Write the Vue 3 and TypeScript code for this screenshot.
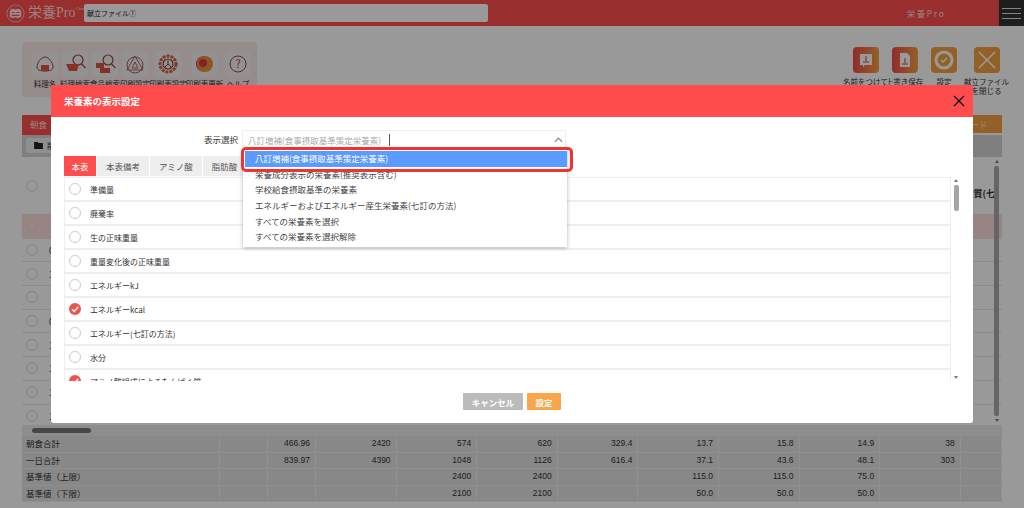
<script lang="ts" setup>
interface Nutrient {
  name: string;
  checked: boolean;
}

const leftTools = [
  { label: '料理名', kind: 'rice' },
  { label: '料理検索', kind: 'cart' },
  { label: '食品検索', kind: 'food' },
  { label: '印刷設定', kind: 'triangle' },
  { label: '印刷表設定', kind: 'gear' },
  { label: '印刷表更新', kind: 'ball' },
  { label: 'ヘルプ', kind: 'help' },
];

const rightTools = [
  { label: '名前をつけて', kind: 'saveas' },
  { label: '上書き保存', kind: 'save' },
  { label: '設定', kind: 'setting' },
  { label: '献立ファイルを閉じる', kind: 'close' },
];

const sheetRows = [
  { no: '', pink: true },
  { no: '0', pink: false },
  { no: '1', pink: false },
  { no: '', pink: false },
  { no: '0', pink: false },
  { no: '1', pink: false },
  { no: '1', pink: false },
  { no: '1', pink: false },
  { no: '1', pink: false },
];

const totals = [
  ['朝食合計', '', '466.96', '2420', '574', '620', '329.4', '13.7', '15.8', '14.9', '38', ''],
  ['一日合計', '', '839.97', '4390', '1048', '1126', '616.4', '37.1', '43.6', '48.1', '303', ''],
  ['基準値（上限）', '', '', '', '2400', '2400', '', '115.0', '115.0', '75.0', '', ''],
  ['基準値（下限）', '', '', '', '2100', '2100', '', '50.0', '50.0', '50.0', '', ''],
];

const tabs = ['本表', '本表備考', 'アミノ酸', '脂肪酸'];

const options = [
  '八訂増補(食事摂取基準策定栄養素)',
  '栄養成分表示の栄養素(推奨表示含む)',
  '学校給食摂取基準の栄養素',
  'エネルギーおよびエネルギー産生栄養素(七訂の方法)',
  'すべての栄養素を選択',
  'すべての栄養素を選択解除',
];

const nutrients: Nutrient[] = [
  { name: '準備量', checked: false },
  { name: '廃棄率', checked: false },
  { name: '生の正味重量', checked: false },
  { name: '重量変化後の正味重量', checked: false },
  { name: 'エネルギーkJ', checked: false },
  { name: 'エネルギーkcal', checked: true },
  { name: 'エネルギー(七訂の方法)', checked: false },
  { name: '水分', checked: false },
  { name: 'アミノ酸組成によるたんぱく質', checked: true },
];
</script>

<template>
  <div class="page">
    <header class="topbar">
      <svg class="logo" viewBox="0 0 20 20" aria-hidden="true">
        <circle cx="10" cy="10" r="9" fill="none" stroke="#ffd0d0" stroke-width="0.8" />
        <path d="M4 7c1-2 4-3 6-1 2-2 5-1 6 1v6c-1 2-4 2-6 1-2 1-5 1-6-1z" fill="#ffe4e4" />
        <path d="M6 9h3M11 9h3M6 12h8" stroke="#ff4d4d" stroke-width="1.2" />
      </svg>
      <span class="brand">栄養Pro<sup>Cloud</sup></span>
      <div class="file-name">献立ファイル①</div>
      <span class="app-name">栄養Pro</span>
      <div class="burger"><i></i><i></i><i></i></div>
    </header>

    <section class="toolbar">
      <div class="tool-panel">
        <div v-for="t in leftTools" :key="t.label" class="tool">
          <div class="tile">
            <svg viewBox="0 0 26 26" aria-hidden="true">
              <template v-if="t.kind === 'rice'">
                <path d="M13 6c-4 0-8 6-8 10 0 3 3 4 8 4s8-1 8-4c0-4-4-10-8-10z" fill="none" stroke="#a04040" />
                <rect x="9" y="14" width="8" height="6" fill="#e0553f" />
              </template>
              <template v-else-if="t.kind === 'cart'">
                <circle cx="16" cy="9" r="5" fill="none" stroke="#a04040" stroke-width="1.2" />
                <path d="M19.5 13l4 4" stroke="#a04040" stroke-width="1.2" />
                <path d="M4 13h13l-2 7H7z" fill="#e0553f" />
              </template>
              <template v-else-if="t.kind === 'food'">
                <circle cx="16" cy="9" r="5" fill="none" stroke="#a04040" stroke-width="1.2" />
                <path d="M19.5 13l4 4" stroke="#a04040" stroke-width="1.2" />
                <rect x="4" y="12" width="8" height="5" fill="#e0553f" />
                <rect x="8" y="17" width="10" height="5" fill="#d9503a" />
              </template>
              <template v-else-if="t.kind === 'triangle'">
                <circle cx="13" cy="14" r="8" fill="none" stroke="#b06060" />
                <path d="M13 5l8 14H5zM13 11l3 6h-6z" fill="none" stroke="#b06060" />
              </template>
              <template v-else-if="t.kind === 'gear'">
                <circle cx="13" cy="13" r="8" fill="none" stroke="#d9603a" stroke-width="3" stroke-dasharray="3 1" />
                <circle cx="13" cy="13" r="5" fill="none" stroke="#8a3a3a" stroke-width="1.2" />
                <path d="M13 13V9M13 13l-3 3M13 13l3 3" stroke="#8a3a3a" />
              </template>
              <template v-else-if="t.kind === 'ball'">
                <circle cx="13" cy="13" r="8" fill="#e8903a" />
                <path d="M13 5a8 8 0 0 0 0 16 8 8 0 0 1-2-16z" fill="#d93a3a" />
                <circle cx="11" cy="12" r="4" fill="#d93a3a" />
              </template>
              <template v-else>
                <circle cx="13" cy="13" r="8" fill="none" stroke="#a04040" />
                <text x="13" y="17" text-anchor="middle" font-size="11" fill="#a04040">?</text>
              </template>
            </svg>
          </div>
          <span class="tool-label">{{ t.label }}</span>
        </div>
      </div>

      <div class="file-tools">
        <div v-for="t in rightTools" :key="t.label" class="file-tool" :class="t.kind">
          <div class="tile-grad">
            <svg viewBox="0 0 26 26" aria-hidden="true">
              <template v-if="t.kind === 'saveas'">
                <path d="M7 7h12v11H12l-2 2v-2H7z" fill="#fff" />
                <path d="M13 9v5M10 15h6" stroke="#c04040" />
              </template>
              <template v-else-if="t.kind === 'save'">
                <path d="M8 6h7l3 3v11H8z" fill="#fff" />
                <path d="M13 11v5M10 17h6" stroke="#c04040" />
              </template>
              <template v-else-if="t.kind === 'setting'">
                <circle cx="13" cy="13" r="8" fill="none" stroke="#fff" stroke-width="3" />
                <path d="M10 13l2 2 4-4" fill="none" stroke="#fff" stroke-width="1.4" />
              </template>
              <template v-else>
                <path d="M5 5l16 16M21 5L5 21" stroke="#fff" stroke-width="1.6" />
              </template>
            </svg>
          </div>
          <span class="tool-label">{{ t.label }}</span>
        </div>
      </div>
    </section>

    <section class="sheet">
      <div class="sheet-tabs">
        <span class="meal-tab">朝食</span>
        <span class="card-tab">カード</span>
      </div>
      <div class="action-bar">
        <span class="folder-btn">
          <svg viewBox="0 0 10 8" aria-hidden="true"><path d="M0 0h4l1 1h5v7H0z" fill="#222" /></svg>
          削除
        </span>
      </div>
      <div class="sheet-body">
        <div class="sheet-head">
          <span class="radio-bg"></span>
          <span class="head-end">脂質(七</span>
        </div>
        <div v-for="(r, i) in sheetRows" :key="i" class="sheet-row" :class="{ pink: r.pink }">
          <span class="radio-cell"><span class="radio-bg"></span></span>
          <span class="row-no">{{ r.no }}</span>
        </div>
        <div class="v-scroll">
          <span class="arrow up"></span>
          <span class="v-thumb"></span>
          <span class="arrow down"></span>
        </div>
      </div>
      <div class="h-scroll"><span class="h-thumb"></span></div>
      <div class="totals">
        <div v-for="row in totals" :key="row[0]" class="total-row">
          <span v-for="(c, i) in row" :key="i" class="total-cell" :class="{ label: i === 0 }">{{ c }}</span>
        </div>
      </div>
    </section>

    <div class="backdrop"></div>

    <div class="dialog">
      <div class="dialog-head">
        <span>栄養素の表示設定</span>
        <svg class="dialog-close" viewBox="0 0 12 12" aria-hidden="true">
          <path d="M1 1l10 10M11 1L1 11" stroke="#111" stroke-width="1.4" />
        </svg>
      </div>
      <div class="dialog-body">
        <div class="select-row">
          <label class="select-label">表示選択</label>
          <div class="select-box">
            <span class="select-value">八訂増補(食事摂取基準策定栄養素)</span>
            <span class="caret"></span>
            <svg class="chevron" viewBox="0 0 10 6" aria-hidden="true">
              <path d="M1 5l4-4 4 4" fill="none" stroke="#999" stroke-width="1.6" />
            </svg>
            <ul class="options">
              <li v-for="(o, i) in options" :key="o" :class="{ active: i === 0 }">{{ o }}</li>
            </ul>
            <span class="callout"></span>
          </div>
        </div>

        <div class="tabs">
          <span v-for="(t, i) in tabs" :key="t" class="tab" :class="{ active: i === 0 }">{{ t }}</span>
        </div>

        <div class="list-wrap">
          <div class="list">
            <div v-for="n in nutrients" :key="n.name" class="list-row">
              <span class="radio" :class="{ on: n.checked }">
                <svg v-if="n.checked" viewBox="0 0 12 12" aria-hidden="true">
                  <path d="M3 6.2l2.2 2.2L9.2 4" fill="none" stroke="#fff" stroke-width="1.4" />
                </svg>
              </span>
              <span class="list-name">{{ n.name }}</span>
            </div>
          </div>
          <div class="list-scroll">
            <span class="arrow up small"></span>
            <span class="list-thumb"></span>
            <span class="arrow down small"></span>
          </div>
        </div>

        <div class="dialog-foot">
          <button class="btn cancel">キャンセル</button>
          <button class="btn ok">設定</button>
        </div>
      </div>
    </div>
  </div>
</template>

<style scoped>
.page {
  position: relative;
  width: 1024px;
  height: 508px;
  overflow: hidden;
  background: #fff;
  font-family: "Noto Sans CJK JP", "Noto Sans", sans-serif;
  font-size: 8.5px;
  color: #333;
}

.topbar {
  display: flex;
  align-items: center;
  height: 26px;
  background: #ff4d4d;
  padding-left: 6px;
}
.logo {
  width: 19px;
  height: 19px;
  flex: none;
}
.brand {
  width: 56px;
  margin-left: 3px;
  font-family: "Liberation Serif", "Noto Sans CJK JP", serif;
  font-size: 14px;
  color: #ffd9d9;
  white-space: nowrap;
  line-height: 1;
}
.brand sup {
  font-size: 4px;
  vertical-align: 7px;
}
.file-name {
  width: 406px;
  height: 18px;
  line-height: 18px;
  background: #fff;
  border-radius: 2px;
  padding-left: 3px;
  box-sizing: border-box;
  font-size: 7px;
  color: #222;
}
.app-name {
  margin-left: 419px;
  width: 93px;
  font-size: 8.5px;
  letter-spacing: 1.6px;
  color: #ffd9d9;
}
.burger {
  display: flex;
  flex-direction: column;
  justify-content: center;
  gap: 4px;
  width: 25px;
  height: 26px;
  padding: 0 3px;
  box-sizing: border-box;
  background: #333;
}
.burger i {
  display: block;
  height: 1px;
  background: #ddd;
}

.toolbar {
  display: flex;
  justify-content: space-between;
  height: 89px;
  padding: 16px 0 0 22px;
  box-sizing: border-box;
}
.tool-panel {
  display: flex;
  width: 235px;
  height: 55px;
  padding: 9px 0 0 8px;
  box-sizing: border-box;
  background: #fbe9e9;
  border-radius: 3px;
}
.tool {
  display: flex;
  flex-direction: column;
  align-items: center;
  width: 30px;
  white-space: nowrap;
}
.tool:nth-child(5) {
  width: 36px;
}
.tool:nth-child(6) {
  width: 37px;
}
.tile {
  width: 26px;
  height: 26px;
  background: #f3f3f3;
  border-radius: 4px;
}
.tile svg,
.tile-grad svg {
  display: block;
  width: 26px;
  height: 26px;
}
.tool-label {
  margin-top: 2px;
  font-size: 7.5px;
  line-height: 9px;
}
.file-tools {
  display: flex;
  margin-top: 5px;
  width: 178px;
  height: 40px;
}
.file-tool {
  display: flex;
  flex-direction: column;
  align-items: center;
  width: 39px;
  text-align: center;
  white-space: nowrap;
}
.file-tool.setting {
  width: 40px;
}
.file-tool.close {
  width: 45px;
  white-space: normal;
}
.file-tool .tool-label {
  margin-top: 4px;
}
.tile-grad {
  width: 26px;
  height: 26px;
  border-radius: 4px;
  background: linear-gradient(90deg, #f04a4a, #f7a043);
}
.file-tool.setting .tile-grad,
.file-tool.close .tile-grad {
  background: #f5a043;
}

.sheet {
  width: 980px;
  margin-left: 22px;
}
.sheet-tabs {
  display: flex;
  justify-content: space-between;
  height: 20px;
  font-size: 8.5px;
}
.meal-tab {
  width: 50px;
  height: 20px;
  line-height: 18px;
  padding-left: 8px;
  box-sizing: border-box;
  background: #ff4d4d;
  color: #ffdede;
}
.card-tab {
  width: 70px;
  height: 18px;
  line-height: 18px;
  padding-left: 30px;
  box-sizing: border-box;
  background: #f5a043;
  color: #ffe3c4;
}
.action-bar {
  height: 22px;
  padding: 3px 0 0 4px;
  box-sizing: border-box;
  background: #d4d4d4;
}
.folder-btn {
  display: inline-flex;
  align-items: center;
  gap: 4px;
  height: 15px;
  padding: 0 8px;
  background: #eee;
  border-radius: 2px;
  font-size: 8px;
}
.folder-btn svg {
  width: 9px;
  height: 7px;
}
.sheet-body {
  position: relative;
  height: 268px;
  overflow: hidden;
}
.sheet-head {
  display: flex;
  align-items: center;
  justify-content: space-between;
  height: 57px;
  padding: 0 6px 0 4px;
  box-sizing: border-box;
  font-weight: 700;
  font-size: 9px;
}
.head-end {
  margin-right: 0;
  padding-right: 1px;
  margin-top: 16px;
}
.sheet-row {
  display: flex;
  align-items: center;
  height: 23.7px;
  border-top: 1px solid #e6e6e6;
  box-sizing: border-box;
}
.sheet-row.pink {
  background: #ffdcdc;
}
.radio-cell {
  width: 22px;
  padding-left: 4px;
  box-sizing: border-box;
}
.radio-bg {
  display: block;
  width: 12px;
  height: 12px;
  border: 1px solid #ddd;
  border-radius: 50%;
  box-sizing: border-box;
}
.row-no {
  margin-left: 5px;
}
.v-scroll {
  position: absolute;
  top: 3px;
  right: 0;
  bottom: 3px;
  width: 11px;
  display: flex;
  flex-direction: column;
  align-items: center;
  gap: 3px;
}
.v-thumb {
  flex: 1;
  width: 5px;
  background: #a8a8a8;
  border-radius: 2px;
}
.arrow {
  width: 0;
  height: 0;
  border-left: 2.5px solid transparent;
  border-right: 2.5px solid transparent;
}
.arrow.up {
  border-bottom: 3px solid #777;
}
.arrow.down {
  border-top: 3px solid #777;
}
.h-scroll {
  height: 11px;
  padding: 3px 0 0 10px;
  box-sizing: border-box;
  background: #ececec;
}
.h-thumb {
  display: block;
  width: 59px;
  height: 5px;
  border-radius: 3px;
  background: #777;
}
.totals {
  display: flex;
  flex-direction: column;
}
.total-row {
  display: grid;
  grid-template-columns: 198px 48px 48px 80.6px 80.6px 80.6px 80.6px 80.6px 80.6px 80.6px 80.6px 1fr;
  height: 16.6px;
  background: #e3e3e3;
  border-bottom: 1px solid #eee;
  box-sizing: border-box;
}
.total-cell {
  padding-right: 5px;
  text-align: right;
  line-height: 15.6px;
  border-right: 1px solid #f0f0f0;
  font-family: "Liberation Sans", "Noto Sans CJK JP", sans-serif;
  font-size: 8.5px;
}
.total-cell.label {
  padding-left: 4px;
  text-align: left;
  font-family: "Noto Sans CJK JP", sans-serif;
}

.backdrop {
  position: absolute;
  inset: 0;
  background: rgba(0, 0, 0, 0.4);
}

.dialog {
  position: absolute;
  left: 51px;
  top: 85px;
  width: 922px;
  height: 338px;
  background: #fff;
  border-radius: 0 0 3px 3px;
}
.dialog-head {
  display: flex;
  align-items: center;
  justify-content: space-between;
  height: 32px;
  padding: 0 8px 0 13px;
  background: #ff4d4d;
  color: #fff;
  font-size: 9.5px;
  font-weight: 700;
}
.dialog-close {
  width: 12px;
  height: 12px;
}
.dialog-body {
  display: flex;
  flex-direction: column;
  padding: 13px 13px 0;
}
.select-row {
  display: flex;
  align-items: center;
  gap: 4px;
}
.select-label {
  width: 174px;
  text-align: right;
}
.select-box {
  position: relative;
  display: flex;
  align-items: center;
  width: 324px;
  height: 18px;
  padding-left: 5px;
  box-sizing: border-box;
  border: 1px solid #eee;
  border-bottom: 0;
}
.select-value {
  color: #aaa;
  white-space: nowrap;
}
.caret {
  width: 1px;
  height: 12px;
  margin-left: 8px;
  background: #555;
}
.chevron {
  position: absolute;
  right: 2px;
  top: 6px;
  width: 9px;
  height: 6px;
}
.options {
  position: absolute;
  z-index: 3;
  left: 0;
  top: 18px;
  width: 324px;
  margin: 0;
  padding: 2px 0;
  box-sizing: border-box;
  list-style: none;
  background: #fff;
  box-shadow: 0 1px 4px rgba(0, 0, 0, 0.3);
  color: #444;
}
.options li {
  height: 15.7px;
  line-height: 15.7px;
  padding-left: 12px;
  white-space: nowrap;
}
.options li.active {
  margin-left: 2px;
  padding-left: 10px;
  background: #5b9bff;
  color: #fff;
}
.callout {
  position: absolute;
  z-index: 4;
  left: -2px;
  top: 16px;
  width: 332px;
  height: 25px;
  border: 3px solid #f0332f;
  border-radius: 5px;
  box-sizing: border-box;
}
.tabs {
  display: flex;
  gap: 1px;
  margin-top: 8px;
  height: 20px;
}
.tab {
  display: flex;
  align-items: center;
  justify-content: center;
  background: #eee;
  color: #555;
  padding: 0 9px;
}
.tab.active {
  width: 32px;
  padding: 0;
  background: #ff4d4d;
  color: #fff;
}
.list-wrap {
  display: flex;
  margin-top: 1px;
  height: 204px;
  overflow: hidden;
}
.list {
  width: 888px;
  height: 204px;
  overflow: hidden;
  border: 1px solid #eee;
  border-width: 1px 1px 0;
  box-sizing: border-box;
}
.list-row {
  display: flex;
  align-items: center;
  height: 24px;
  flex: none;
  padding-left: 4px;
  box-sizing: border-box;
  border-bottom: 2px solid #eee;
}
.radio {
  width: 12px;
  height: 12px;
  border: 1px solid #ccc;
  border-radius: 50%;
  box-sizing: border-box;
  flex: none;
}
.radio.on {
  border: 0;
  background: #ef5350;
}
.radio svg {
  display: block;
  width: 12px;
  height: 12px;
}
.list-name {
  margin-left: 9px;
  font-size: 8px;
}
.list-scroll {
  display: flex;
  flex-direction: column;
  align-items: center;
  width: 8px;
  margin-left: 1px;
  padding-top: 2px;
  height: 200px;
}
.arrow.small {
  border-left-width: 2px;
  border-right-width: 2px;
}
.arrow.small.down {
  margin-top: auto;
}
.list-thumb {
  margin-top: 3px;
  width: 5px;
  height: 26px;
  border-radius: 2px;
  background: #a5a5a5;
}
.dialog-foot {
  display: flex;
  justify-content: center;
  gap: 4px;
  margin-top: 12px;
  padding-right: 0;
}
.btn {
  height: 17px;
  padding: 0;
  border: 0;
  border-radius: 1px;
  color: #fff;
  font-family: inherit;
  font-size: 8.5px;
  font-weight: 700;
}
.btn.cancel {
  width: 60px;
  background: #bbb;
}
.btn.ok {
  width: 34px;
  background: #f9a54a;
}
</style>

<style>
html,
body {
  margin: 0;
  overflow: hidden;
}
</style>
